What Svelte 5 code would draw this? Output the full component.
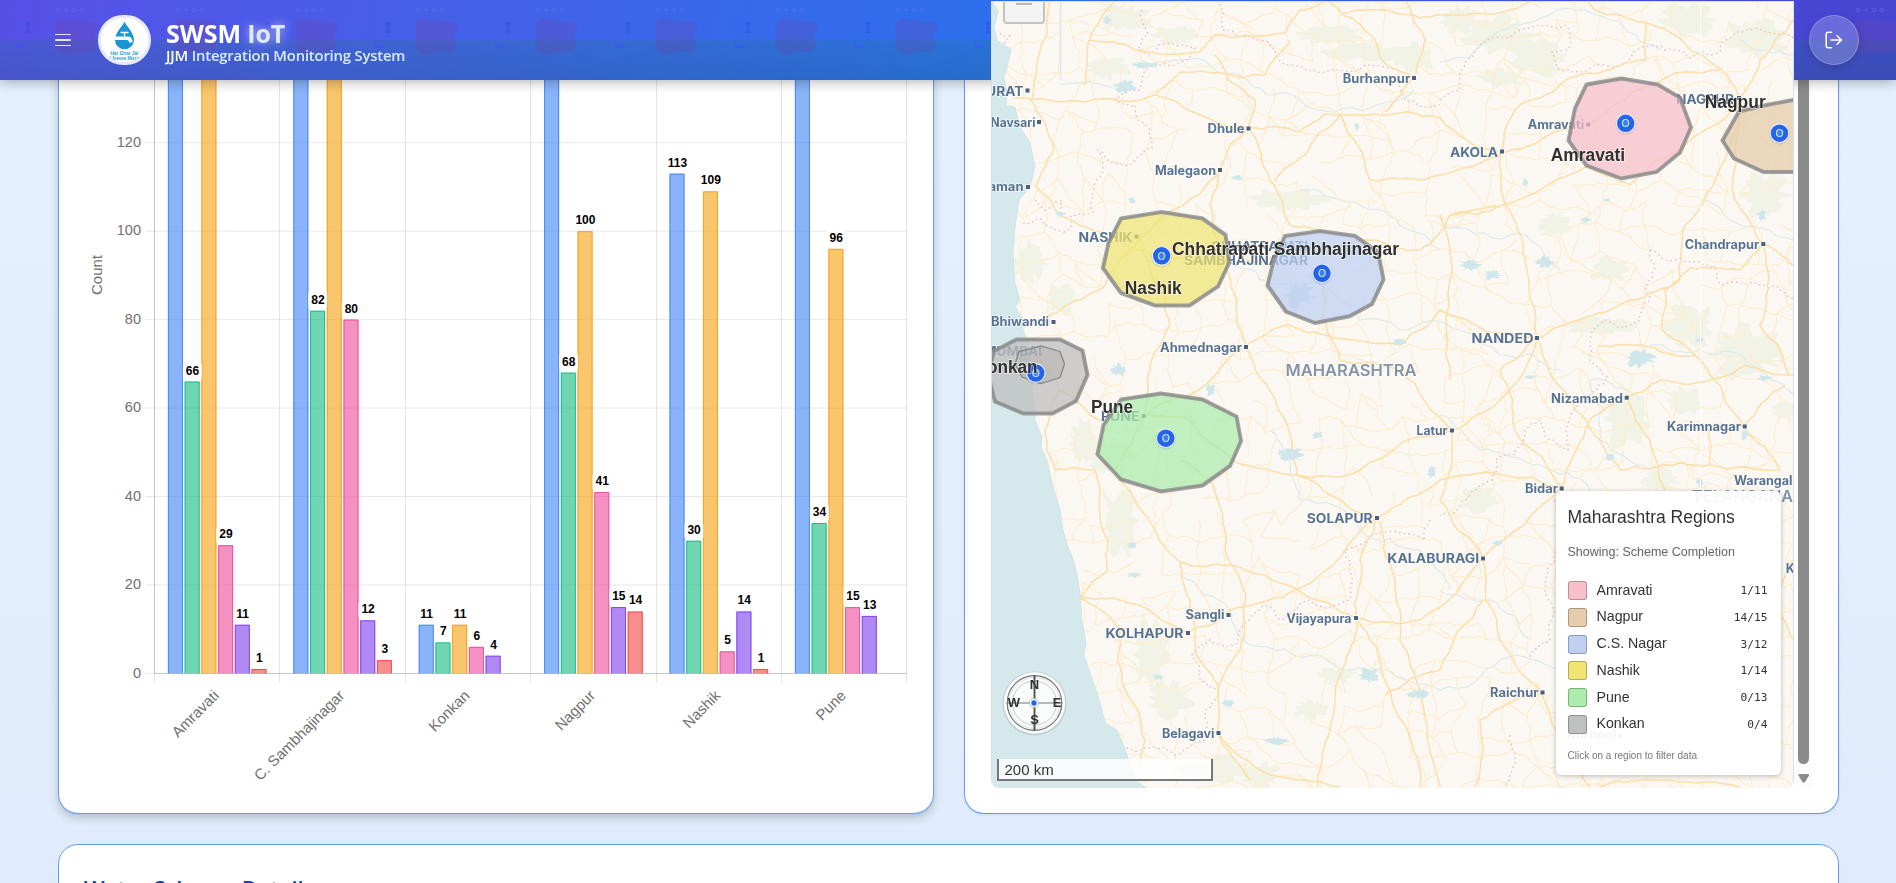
<script>
  const seriesColors = ['59,130,246', '16,185,129', '245,158,11', '236,72,153', '124,58,237', '239,68,68'];
  const groups = [
    { name: 'Amravati', values: [170, 66, 160, 29, 11, 1] },
    { name: 'C. Sambhajinagar', values: [170, 82, 160, 80, 12, 3] },
    { name: 'Konkan', values: [11, 7, 11, 6, 4, 0] },
    { name: 'Nagpur', values: [170, 68, 100, 41, 15, 14] },
    { name: 'Nashik', values: [113, 30, 109, 5, 14, 1] },
    { name: 'Pune', values: [170, 34, 96, 15, 13, 0] }
  ];
  const X0 = 154.5, STEP = 125.4, Y0 = 673.4, UNIT = 4.4225;
  const ticks = [0, 20, 40, 60, 80, 100, 120];
  const yOf = (v) => Y0 - v * UNIT;
  const bars = groups.flatMap((g, gi) =>
    g.values.map((v, i) => ({
      v,
      x: X0 + gi * STEP + 13.4 + i * 16.72,
      y: yOf(v),
      h: v * UNIT,
      c: seriesColors[i]
    }))
  ).filter((b) => b.v > 0);
  const labelled = bars.filter((b) => b.y > 60);

  const legend = [
    ['Amravati', '1/11', '#f9bfc8'],
    ['Nagpur', '14/15', '#e7cdac'],
    ['C.S. Nagar', '3/12', '#c0d0f0'],
    ['Nashik', '1/14', '#f0e473'],
    ['Pune', '0/13', '#acecac'],
    ['Konkan', '0/4', '#bfc1c1']
  ];

  // name, x, baseline, width, size, dot x, dot y
  const cities = [
    ['SURAT', 977, 95.7, 46.5, 13, 1027.5, 90.5],
    ['Navsari', 990.5, 126.5, 45, 12.5, 1039, 122],
    ['Daman', 979, 191, 44.5, 12.5, 1028, 187],
    ['Burhanpur', 1342.7, 82.7, 67.5, 12.5, 1414, 78],
    ['Dhule', 1207.5, 133, 37, 12.5, 1248.5, 128.5],
    ['Malegaon', 1155, 175, 61, 12.5, 1220, 170],
    ['NASHIK', 1078.5, 241.5, 54, 13, 1136.5, 236.5],
    ['CHHATRAPATI', 1211, 251, 97, 13, 0, 0],
    ['SAMBHAJINAGAR', 1184, 265, 124, 13, 0, 0],
    ['Amravati', 1527.7, 129, 56.5, 12.5, 1588.3, 124.5],
    ['AKOLA', 1450, 156.5, 48, 13, 1502, 151.5],
    ['NAGPUR', 1676, 103.5, 58, 13, 1739, 98],
    ['Chandrapur', 1684.7, 248.5, 74.5, 12.5, 1763.3, 244],
    ['Bhiwandi', 991, 326.3, 58, 12.5, 1053.5, 322],
    ['MUMBAI', 984, 356, 58, 13, 0, 0],
    ['Ahmednagar', 1160, 351.7, 82, 12.5, 1246, 347],
    ['PUNE', 1101, 420.7, 38.5, 13, 1143.7, 416],
    ['Latur', 1416.5, 434.7, 31, 12.5, 1452, 430.5],
    ['NANDED', 1471.5, 342.5, 62, 13, 1537, 338],
    ['Nizamabad', 1551, 402.5, 72, 12.5, 1626.7, 397.7],
    ['Karimnagar', 1667, 431, 74, 12.5, 1744.7, 426.5],
    ['Warangal', 1734, 485, 58.5, 12.5, 0, 0],
    ['Bidar', 1525, 493, 33, 12.5, 1561.7, 488.5],
    ['SOLAPUR', 1306.7, 523, 66, 13, 1377, 518],
    ['KALABURAGI', 1387.3, 563.3, 92, 13, 1483, 558.5],
    ['Khammam', 1785.7, 572.7, 66, 12.5, 0, 0],
    ['HYDERABAD', 1575, 557, 84, 13, 0, 0],
    ['Sangli', 1185.5, 619.3, 39, 12.5, 1228.5, 615],
    ['KOLHAPUR', 1105.5, 638, 78, 13, 1188, 633],
    ['Vijayapura', 1286.5, 623.3, 65, 12.5, 1356, 618],
    ['Belagavi', 1162, 737.5, 52.5, 12.5, 1218.5, 733],
    ['Raichur', 1490, 697, 48.5, 12.5, 1542.5, 692.5],
    ['Kurnool', 1567, 739, 49.5, 12.5, 1620.5, 736]
  ];

  const regions = [
    { fill: 'rgba(240,228,115,.72)', pts: '1121,218.5 1161.5,212 1202.5,218.5 1225.5,235 1229.5,262 1218,286.5 1189.5,305.5 1155,305.5 1121,293 1103,268 1108.5,243' },
    { fill: 'rgba(190,208,242,.72)', pts: '1285,236 1320,231 1355,236 1378,252 1383.5,279.5 1372,304 1349.5,316.3 1315,323 1286,311.5 1267.5,285.5 1273.5,261' },
    { fill: 'rgba(247,190,203,.72)', pts: '1586.5,84.5 1621.5,78.5 1657.5,84.5 1680,97.5 1691,127.5 1680,152.5 1656.5,172 1621.5,178.5 1586.5,165.5 1568.5,140.5 1575,108.5' },
    { fill: 'rgba(229,203,168,.72)', pts: '1810,97 1793,100 1766.5,105 1739,111.5 1722.5,140.5 1734,158.5 1763.5,172 1810,172' },
    { fill: 'rgba(170,236,170,.72)', pts: '1121,399.5 1161,393.5 1202.5,399.5 1236.5,416.5 1241,441 1230,466 1202.5,485.5 1161,491.5 1121,479.5 1097.5,454.5 1103.5,425' },
    { fill: 'rgba(190,190,190,.74)', pts: '1016.5,339.5 1060,339.5 1082.5,350.5 1087.5,375 1076,401 1052.5,413.5 1023.5,413.5 995,401.5 988,375 994,351' }
  ];

  const markers = [[1161.7, 255.8], [1322, 273.3], [1625.7, 123.3], [1779.5, 133.2], [1035.8, 373], [1165.8, 438.2]];
  const names = [
    ['Nashik', 1124.7, 293.5, 57],
    ['Chhatrapati Sambhajinagar', 1172, 254.7, 227],
    ['Amravati', 1550.7, 161, 74.5],
    ['Nagpur', 1704.7, 108, 61],
    ['Pune', 1091, 413, 42],
    ['Konkan', 974.5, 372.7, 63]
  ];

  // Deterministic noise for the base map's fine line work
  let seed = 41;
  const rnd = () => {
    seed = (seed * 1664525 + 1013904223) % 4294967296;
    return seed / 4294967296;
  };
  function wiggle(pts, amp = 0.13) {
    let p = pts;
    for (let k = 0; k < 3; k++) {
      const q = [p[0]];
      for (let i = 1; i < p.length; i++) {
        const [ax, ay] = p[i - 1], [bx, by] = p[i];
        const d = (rnd() - 0.5) * 2 * amp;
        q.push([(ax + bx) / 2 - (by - ay) * d, (ay + by) / 2 + (bx - ax) * d], p[i]);
      }
      p = q;
    }
    return 'M' + p.map(([x, y]) => x.toFixed(1) + ' ' + y.toFixed(1)).join('L');
  }

  const mesh = [];
  const S = 24;
  for (let r = 0; r < 35; r++) {
    mesh.push([]);
    for (let c = 0; c < 36; c++) mesh[r].push([980 + c * S + (rnd() - 0.5) * 21, -8 + r * S + (rnd() - 0.5) * 21]);
  }
  let minorRoads = '';
  for (let r = 0; r < 34; r++)
    for (let c = 0; c < 35; c++) {
      if (rnd() < 0.66) minorRoads += wiggle([mesh[r][c], mesh[r][c + 1]]);
      if (rnd() < 0.66) minorRoads += wiggle([mesh[r][c], mesh[r + 1][c]]);
      if (rnd() < 0.12) minorRoads += wiggle([mesh[r][c], mesh[r + 1][c + 1]]);
    }

  const majorRoads = [
    [[1050, 0], [1047, 35], [1036, 75], [1031, 100], [1046, 125], [1054, 148], [1036, 185], [1060, 215], [1100, 232], [1140, 250]],
    [[1118, 0], [1090, 38], [1085, 85]],
    [[1015, 98], [1085, 102], [1155, 95], [1200, 115], [1248, 128], [1300, 132], [1325, 114], [1405, 112], [1440, 118], [1500, 152]],
    [[1090, 40], [1135, 50], [1200, 52], [1215, 35], [1285, 33], [1300, 10], [1325, 0]],
    [[1155, 95], [1180, 72], [1265, 75], [1290, 40]],
    [[1215, 55], [1228, 80], [1255, 100], [1248, 128]],
    [[1248, 128], [1230, 145], [1220, 170], [1198, 195], [1140, 238], [1105, 285], [1080, 300], [1035, 325]],
    [[1248, 128], [1270, 180], [1290, 225], [1325, 235]],
    [[1220, 170], [1210, 205], [1225, 260], [1237, 300], [1246, 347], [1220, 370], [1190, 395], [1143, 416]],
    [[1140, 238], [1150, 270], [1170, 325], [1150, 370], [1143, 416]],
    [[1275, 182], [1305, 155], [1340, 115], [1370, 180], [1395, 178], [1440, 175], [1502, 152]],
    [[1325, 0], [1342, 14], [1400, 14], [1440, 15], [1510, 10], [1560, 0]],
    [[1406, 0], [1425, 40], [1414, 78], [1385, 112]],
    [[1342, 14], [1375, 40], [1382, 60], [1414, 78]],
    [[1588, 0], [1595, 10], [1645, 22], [1690, 50], [1720, 68], [1739, 98], [1690, 140], [1630, 185], [1588, 165], [1502, 205], [1450, 215]],
    [[1502, 152], [1540, 140], [1588, 124], [1650, 85], [1720, 70]],
    [[1645, 22], [1646, 60], [1610, 70], [1560, 85], [1520, 105], [1500, 152], [1505, 205], [1525, 260], [1537, 338]],
    [[1739, 98], [1760, 60], [1793, 20]],
    [[1739, 98], [1725, 160], [1685, 225], [1680, 280], [1630, 300], [1580, 320], [1537, 338]],
    [[1739, 98], [1735, 200], [1763, 244], [1768, 290], [1760, 325], [1790, 376]],
    [[1793, 265], [1763, 244], [1740, 270], [1690, 268]],
    [[1450, 215], [1500, 207]], [[1450, 215], [1420, 250], [1370, 240], [1325, 250], [1246, 260], [1140, 250]],
    [[1325, 250], [1325, 300], [1340, 360], [1400, 370], [1452, 430]],
    [[1246, 347], [1290, 325], [1325, 335], [1400, 345], [1440, 310], [1537, 338]],
    [[1246, 347], [1262, 380], [1285, 420], [1297, 475], [1340, 500], [1377, 518], [1395, 580], [1400, 640], [1420, 690], [1440, 787]],
    [[1143, 416], [1190, 420], [1235, 462], [1297, 475], [1360, 470], [1452, 430], [1500, 400], [1537, 338]],
    [[1143, 416], [1115, 470], [1180, 562], [1190, 600], [1195, 650], [1218, 685], [1218, 733], [1250, 780]],
    [[1143, 416], [1100, 420], [1060, 390], [1040, 360]],
    [[1060, 390], [1045, 430], [1055, 470], [1095, 470], [1108, 540], [1108, 570], [1080, 598], [1120, 630], [1125, 690], [1145, 740], [1140, 770]],
    [[1080, 598], [1120, 600], [1188, 633], [1230, 610], [1300, 588], [1377, 518], [1440, 480], [1562, 488]],
    [[1180, 562], [1230, 565], [1298, 590], [1356, 618], [1420, 620], [1483, 558], [1562, 488], [1590, 420], [1627, 397]],
    [[1356, 618], [1350, 650], [1335, 700], [1318, 787]],
    [[1356, 618], [1385, 680], [1410, 740], [1420, 787]],
    [[1377, 518], [1360, 560], [1356, 618]],
    [[1218, 733], [1270, 775], [1340, 787]],
    [[1246, 594], [1225, 550], [1210, 480], [1180, 460]],
    [[1246, 594], [1240, 650], [1218, 700]],
    [[1452, 430], [1440, 500], [1483, 558], [1500, 640], [1542, 692], [1560, 740], [1590, 787]],
    [[1537, 338], [1570, 400], [1600, 440], [1620, 470], [1680, 463], [1710, 465], [1780, 470]],
    [[1627, 397], [1650, 440], [1665, 490]], [[1627, 397], [1660, 380], [1720, 378], [1745, 365], [1793, 375]],
    [[1597, 346], [1655, 348], [1695, 355], [1720, 385], [1744, 426], [1780, 470]],
    [[1710, 465], [1708, 430], [1744, 426], [1785, 385]],
    [[1695, 355], [1662, 330], [1665, 290], [1690, 268]],
    [[1440, 215], [1450, 280], [1450, 380]], [[1537, 338], [1500, 370], [1515, 430], [1562, 488]],
    [[1542, 692], [1480, 720], [1475, 787]], [[1385, 695], [1440, 670], [1483, 600]],
    [[1793, 560], [1775, 610], [1793, 640]], [[1600, 787], [1670, 780], [1740, 787]]
  ].map((p) => wiggle(p, 0.09)).join('');

  const rivers = [
    [[1140, 60], [1180, 60], [1240, 75], [1300, 100], [1370, 108], [1414, 90]],
    [[1060, 85], [1120, 88]],
    [[1440, 62], [1490, 40], [1540, 18], [1610, 20], [1660, 50]],
    [[1140, 262], [1230, 265], [1270, 285], [1330, 290], [1400, 330], [1460, 330], [1500, 355], [1560, 370]],
    [[1300, 190], [1370, 210], [1410, 230], [1440, 250]],
    [[1440, 415], [1480, 450], [1540, 465], [1590, 490]],
    [[1270, 430], [1290, 475], [1300, 500], [1360, 530], [1420, 550], [1450, 590]],
    [[1180, 575], [1230, 610], [1250, 645], [1320, 655], [1370, 670], [1440, 690], [1500, 660], [1560, 670]],
    [[1440, 590], [1490, 600], [1530, 640]],
    [[1640, 400], [1590, 380], [1600, 440], [1650, 470]],
    [[1650, 345], [1700, 350], [1760, 370], [1793, 395]],
    [[1700, 200], [1730, 220], [1793, 240]],
    [[1440, 225], [1510, 235], [1560, 270]],
    [[1740, 40], [1793, 55]]
  ].map((p) => wiggle(p, 0.16)).join('');

  const borders = [
    [[1218, 0], [1222, 30], [1260, 40], [1285, 65], [1330, 70], [1400, 70], [1405, 100], [1440, 105]],
    [[1142, 10], [1148, 35], [1138, 48], [1150, 54], [1195, 48], [1190, 58], [1155, 65], [1140, 90], [1115, 98], [1135, 105], [1150, 130], [1152, 148], [1130, 165], [1098, 150], [1103, 165], [1092, 195], [1093, 212], [1072, 215], [1068, 230], [1040, 218], [1020, 222]],
    [[1440, 100], [1460, 90], [1465, 65], [1480, 45], [1520, 30], [1565, 25], [1567, 50], [1552, 52], [1560, 70], [1590, 68], [1640, 48], [1665, 50], [1690, 58], [1720, 52], [1722, 42], [1750, 30], [1793, 38]],
    [[1650, 250], [1655, 268], [1646, 285], [1650, 300], [1640, 320], [1625, 328], [1605, 320], [1590, 345], [1590, 360], [1608, 378], [1590, 395], [1570, 415], [1568, 450], [1550, 440], [1540, 420], [1525, 430], [1515, 455], [1495, 460], [1492, 480], [1470, 495], [1440, 515]],
    [[1650, 250], [1690, 262], [1715, 268], [1722, 285], [1760, 285], [1793, 298]],
    [[1430, 520], [1425, 540], [1345, 550], [1350, 600], [1310, 600], [1280, 620], [1265, 605], [1240, 630], [1235, 645], [1210, 640], [1192, 655], [1200, 680], [1218, 690], [1205, 710], [1205, 740], [1175, 755], [1150, 748], [1125, 748]],
    [[1554, 500], [1560, 540], [1545, 580], [1555, 610], [1550, 640], [1530, 660]],
    [[1510, 735], [1515, 760], [1503, 787]],
    [[1000, 33], [1012, 35], [1003, 45]],
    [[1035, 200], [1045, 210], [1062, 200], [1060, 215]]
  ].map((p) => wiggle(p, 0.18)).join('');

  function blob(cx, cy, rx, ry) {
    const n = 30;
    let d = '';
    for (let i = 0; i < n; i++) {
      const a = (i / n) * Math.PI * 2, k = 0.45 + rnd() * 0.65;
      d += (i ? 'L' : 'M') + (cx + Math.cos(a) * rx * k).toFixed(1) + ' ' + (cy + Math.sin(a) * ry * k).toFixed(1);
    }
    return d + 'Z';
  }
  const parks = [
    [1108, 68, 22, 12], [1125, 18, 28, 12], [1175, 35, 22, 9], [1330, 35, 35, 9], [1370, 52, 50, 9], [1415, 58, 20, 16], [1290, 200, 40, 12],
    [1500, 35, 40, 22], [1535, 58, 30, 18], [1500, 78, 25, 9], [1460, 20, 25, 14], [1690, 20, 30, 18], [1755, 40, 35, 20], [1765, 195, 26, 25],
    [1030, 260, 18, 22], [1060, 300, 18, 18], [1110, 455, 25, 18], [1120, 520, 18, 40], [1150, 655, 20, 40], [1170, 700, 24, 18], [1215, 770, 35, 14], [1260, 775, 20, 14],
    [1555, 225, 16, 12], [1610, 270, 20, 14], [1600, 325, 40, 8], [1690, 325, 28, 22], [1745, 350, 40, 28], [1625, 420, 24, 30], [1685, 400, 18, 14], [1660, 480, 18, 12], [1785, 410, 12, 10],
    [1335, 675, 20, 7], [1310, 710, 18, 9], [1480, 500, 20, 14], [1010, 300, 10, 20], [1085, 440, 15, 22]
  ].map((b) => blob(...b)).join('');
  const lakes = [
    [1125, 86, 12, 8], [1145, 65, 16, 4], [1640, 358, 17, 10], [1368, 675, 12, 9], [1420, 694, 12, 5], [1300, 295, 18, 14], [1290, 455, 16, 7], [1237, 178, 6, 3],
    [1107, 20, 5, 5], [1158, 677, 7, 3], [1228, 703, 7, 4], [1277, 741, 14, 4], [1135, 575, 8, 3], [1132, 545, 5, 4], [1545, 262, 9, 6], [1470, 265, 12, 6], [1492, 275, 10, 5], [1586, 220, 6, 3],
    [1762, 215, 5, 7], [1610, 457, 6, 4], [1744, 435, 4, 6], [1700, 483, 4, 5], [1765, 378, 8, 3], [1700, 340, 6, 3], [1498, 543, 6, 3], [1210, 390, 5, 7], [1118, 370, 8, 7], [1400, 342, 8, 4],
    [1525, 182, 3, 5], [1607, 200, 4, 2], [1357, 127, 3, 4], [1060, 214, 6, 3], [1132, 200, 4, 4], [1317, 435, 6, 4], [1432, 472, 5, 6], [1530, 377, 7, 2]
  ].map((b) => blob(...b)).join('');
</script>

<header class="topbar">
  <svg class="pattern" width="1896" height="80" aria-hidden="true">
    <defs>
      <pattern id="motif" width="120" height="120" patternUnits="userSpaceOnUse">
        <path d="M57 21q3-3 10-2q11 2 20 2q9 0 10 3q1 4-2 8q-2 4 0 8q3 6 0 9q-4 4-9 3q-7-1-12 1q-9 3-14 0q-6-4-5-9q2-5 1-9q-2-6 1-14z" fill="#7a3a98" opacity=".22" />
        <g fill="none" stroke="#7c86ff" opacity=".3"><circle cx="58" cy="10" r="1.8" /><circle cx="66" cy="10" r=".7" /><circle cx="74" cy="10" r="1.8" /><circle cx="82" cy="10" r="1.8" /></g>
        <path d="M25 22h6v2l-1.500 2v4l1.500 2v1h-6v-1l1.500-2v-4l-1.500-2z" fill="#1d3fe0" opacity=".26" />
        <path d="M13 41l3 1 2 3h6v3h-8l-1-4z" fill="#3b4cff" opacity=".42" />
        <circle cx="13.500" cy="25" r="3.500" fill="none" stroke="#3348d8" opacity=".14" />
      </pattern>
    </defs>
    <rect y="40" width="1896" height="40" fill="#10806a" opacity=".16" />
    <rect width="1896" height="80" fill="url(#motif)" />
  </svg>
  <button class="menu" aria-label="Menu"><i></i><i></i><i></i></button>
  <div class="logo">
    <svg width="47" height="44" viewBox="101 18 47 44">
      <path d="M124.500 21.500c2 5 9.500 11 9.500 18.500a9.500 9.300 0 0 1-19 0c0-7.500 7.500-13.500 9.500-18.500z" fill="#1b96d3" />
      <path d="M120.500 32.500h8M124.500 32v4" stroke="#fff" stroke-width="1.300" fill="none" />
      <path d="M115 36.500h12c4 0 5.500 2 5.500 6h-3.500c0-2-1-2.500-3-2.500h-11z" fill="#fff" />
      <text x="110.500" y="54.500" textLength="28" lengthAdjust="spacingAndGlyphs">Har Ghar Jal</text>
      <text x="105" y="59.500" textLength="38" lengthAdjust="spacingAndGlyphs">Jal Jeevan Mission</text>
    </svg>
  </div>
  <div class="brand">
    <div class="name">SWSM <span>IoT</span></div>
    <div class="tag">JJM <span>Integration Monitoring System</span></div>
  </div>
  <button class="logout" aria-label="Log out">
    <svg width="18" height="18" viewBox="0 0 18 18" fill="none" stroke="#fff" stroke-width="1.500" stroke-linecap="round" stroke-linejoin="round">
      <path d="M6.500 1.200H3.200A2 2 0 0 0 1.200 3.200v11.600a2 2 0 0 0 2 2h3.300M6 9h10.500M12 4.700L16.500 9 12 13.300" />
    </svg>
  </button>
</header>

<main>
  <section class="card chart">
    <svg width="875" height="813" viewBox="59 0 875 813">
      {#each ticks as t}
        <line x1="145" x2="907" y1={yOf(t)} y2={yOf(t)} stroke="rgba(0,0,0,.09)" />
        <text class="tick" x="141" y={yOf(t) + 4.1} text-anchor="end">{t}</text>
      {/each}
      {#each [0, 1, 2, 3, 4, 5, 6] as i}
        <line x1={Math.floor(X0 + i * STEP) + 0.5} x2={Math.floor(X0 + i * STEP) + 0.5} y1="0" y2="683" stroke="rgba(0,0,0,.1)" />
      {/each}
      <path d="M154.500 0V673M154 673.500H907" stroke="rgba(0,0,0,.14)" />
      {#each bars as b}
        <rect x={b.x} y={b.y} width="15.050" height={b.h} fill="rgba({b.c},.6)" />
        <path d="M{b.x + 0.5} {Y0}V{b.y + 0.5}H{b.x + 14.55}V{Y0}" fill="none" stroke="rgb({b.c})" stroke-opacity=".85" />
      {/each}
      {#each labelled as b}
        {@const w = String(b.v).length * 6.67}
        <rect x={b.x + 7.7 - w / 2 - 2.8} y={b.y - 19} width={w + 5.6} height="17.500" rx="3" fill="#fff" opacity=".9" />
        <text class="val" x={b.x + 7.9} y={b.y - 7} text-anchor="middle">{b.v}</text>
      {/each}
      {#each groups as g, i}
        <text class="tick cat" text-anchor="end" transform="translate({X0 + (i + 0.5) * STEP + 2.6} 696.500) rotate(-45)">{g.name}</text>
      {/each}
      <text class="tick cat" text-anchor="middle" transform="translate(102 275) rotate(-90)">Count</text>
    </svg>
  </section>

  <section class="card mapcard">
    <div class="map">
      <svg width="801" height="786" viewBox="992 2 801 786">
        <rect x="992" y="0" width="801" height="790" fill="#fbf8f3" />
        <path d={parks} fill="#f1f3e7" stroke="#f1f3e7" stroke-width="2" stroke-linejoin="round" />
        <path d={rivers} fill="none" stroke="#dcebed" stroke-width="1.200" />
        <path d={minorRoads} fill="none" stroke="#fdeed0" stroke-width="1.200" />
        <path d={borders} fill="none" stroke="#e3c6d0" stroke-width="1.400" stroke-dasharray="1.800 3" />
        <path d={majorRoads} fill="none" stroke="#fbe0ab" stroke-width="1.600" stroke-linejoin="round" />
        <path d={lakes} fill="#cfe6ea" />
        <path d="M980 0H992L998 12 994 27 997 40 1011 50 1008 63 1004 78 1007 92 1006 106 1015 107 1020 127 1030 143 1035 167 1030 187 1019 200 1015 227 1013 253 1015 283 1019 300 1015 307 1022 317 1023 330 1028 342 1032 387 1034 403 1035 420 1042 437 1041 447 1047 460 1052 483 1060 510 1063 530 1069 550 1071 553 1076 570 1080 593 1082 620 1086 643 1084 655 1090 673 1097 693 1102 710 1105 723 1117 730 1124 747 1129 760 1135 780 1150 790H980Z" fill="#d5e8eb" stroke="#c8dfe5" stroke-width=".7" />
        <path d="M1060.500 0V80" stroke="#e1e4ec" stroke-width="1.500" /><path d="M1700.500 0V490" stroke="#fff" opacity=".8" />
        <g class="place">
          {#each cities as c}
            <text x={c[1]} y={c[2]} font-size={c[4]} textLength={c[3]} lengthAdjust="spacingAndGlyphs">{c[0]}</text>
            {#if c[5]}<rect x={c[5] - 2} y={c[6] - 2} width="4" height="4" fill="#49617f" />{/if}
          {/each}
        </g>
        <g class="state">
          <text x="1285.500" y="375.700" textLength="131" lengthAdjust="spacingAndGlyphs">MAHARASHTRA</text>
          <text x="1692" y="502" textLength="101" lengthAdjust="spacingAndGlyphs">TELANGANA</text>
        </g>
        {#each regions as r}
          <polygon points={r.pts} fill={r.fill} stroke="#8c8c8c" stroke-opacity=".8" stroke-width="4" />
          <polygon points={r.pts} fill="none" stroke="#666" stroke-opacity=".3" stroke-width="1" />
        {/each}
        <polygon points="1019,351.500 1041,346 1060,351.500 1064.500,364 1060,377.500 1041,383.500 1022,377 1015,364" fill="rgba(160,160,160,.3)" stroke="#888" stroke-width="1.300" />
        {#each markers as m}
          <circle cx={m[0]} cy={m[1] + 1} r="10.500" fill="#1e3a8a" opacity=".1" />
          <circle cx={m[0]} cy={m[1]} r="9.300" fill="#2563eb" stroke="#e6edfb" stroke-width="1.200" />
          <ellipse cx={m[0]} cy={m[1]} rx="3" ry="3.900" fill="#3b82f6" />
          <text class="mk" x={m[0]} y={m[1] + 4} text-anchor="middle">O</text>
        {/each}
        <g class="rname">
          {#each names as n}
            <text x={n[1]} y={n[2]} textLength={n[3]} lengthAdjust="spacingAndGlyphs">{n[0]}</text>
          {/each}
        </g>
        <circle cx="1034.500" cy="703.500" r="32" fill="#223" opacity=".12" />
        <circle cx="1034.500" cy="703" r="30.700" fill="#fbfdfd" />
        <g fill="none">
          <circle cx="1034.500" cy="703" r="27.300" stroke="#777" stroke-width="1.200" />
          <circle cx="1034.500" cy="703" r="25.500" stroke="#ccc" stroke-width=".6" />
          <circle cx="1034.500" cy="703" r="22" stroke="#c9c9c9" />
          <path d="M1006.500 703h56" stroke="#777" />
          <path d="M1034.500 675v56" stroke="#555" stroke-width="2" />
        </g>
        <circle cx="1034" cy="703" r="4.600" fill="#fff" stroke="#aaa" stroke-width=".8" />
        <circle cx="1034" cy="703" r="2.700" fill="#2563eb" />
        <g class="nesw">
          <text x="1034.500" y="688.500">N</text><text x="1034.500" y="724">S</text><text x="1014" y="707">W</text><text x="1057" y="707">E</text>
        </g>
      </svg>
      <div class="zoomout"></div>
      <div class="scale">200 km</div>
      <aside class="legend">
        <h3>Maharashtra Regions</h3>
        <p class="mode">Showing: Scheme Completion</p>
        <ul>
          {#each legend as l}
            <li><i style="background:{l[2]}"></i><span>{l[0]}</span><b>{l[1]}</b></li>
          {/each}
        </ul>
        <p class="hint">Click on a region to filter data</p>
      </aside>
    </div>
    <div class="scroll"><div class="thumb"></div><svg width="13" height="11"><path d="M2 1h9.500q1 .5.500 1.500l-4 6.500q-1.200 1.500-2.500 0l-4-6.500q-.5-1 .5-1.500z" fill="#8b8b8b" /></svg></div>
  </section>

  <section class="card details"><h2>Water Scheme Details</h2></section>
</main>

<style>
  :global(body) { margin: 0; overflow: hidden; font-family: 'Liberation Sans', Arial, sans-serif; }
  :global(#app) { height: 883px; overflow: hidden; background: linear-gradient(180deg, #e5f1ff, #e0ecfd); }
  .topbar { position: fixed; inset: 0 0 auto 0; z-index: 10; height: 80px; box-sizing: border-box; display: flex; align-items: center; padding: 0 37px 0 55px; background: linear-gradient(180deg, rgba(0,0,0,0) 50%, rgba(0,0,0,.06)), linear-gradient(100deg, #5750e8 0%, #4361e8 25%, #2b70ee 54%, #3a55de 76%, #4746d3 95%); box-shadow: 0 2px 12px rgba(0,0,0,.3); }
  .pattern { position: absolute; inset: 0; }
  button { padding: 0; border: 0; background: none; position: relative; }
  .menu { width: 16px; display: grid; gap: 3.600px; }
  .menu i { height: 1.900px; background: #e3e4fb; border-radius: 1px; }
  .logo { position: relative; width: 47px; height: 44px; margin-left: 27px; border: 3px solid #e9e9fc; border-radius: 26px; background: #fff; overflow: hidden; }
  .logo svg { display: block; }
  .logo text { font: 700 4.600px 'Liberation Sans', sans-serif; fill: #2a9bd0; }
  .brand { position: relative; margin: 5px 0 0 15px; font-family: 'Open Sans', 'Noto Sans', sans-serif; color: #fff; white-space: nowrap; }
  .name { font-size: 25px; font-weight: 700; line-height: 25px; letter-spacing: -.1px; }
  .name span { color: #dbeafe; text-shadow: 0 0 10px rgba(255,255,255,.6); }
  .tag { font-size: 14.800px; font-weight: 650; line-height: 18px; letter-spacing: -.17px; }
  .tag span { color: #dbeafe; }
  .logout { margin-left: auto; width: 50px; height: 50px; box-sizing: border-box; border-radius: 50%; background: rgba(255,255,255,.2); border: 1px solid rgba(255,255,255,.22); box-shadow: 0 3px 8px rgba(0,0,0,.15); display: grid; place-items: center; }

  main { display: grid; grid-template-columns: 1fr 1fr; grid-template-rows: 814px 200px; gap: 30px; padding: 0 57px 0 58px; }
  .card { box-sizing: border-box; background: #fff; border: 1px solid #659bf5; min-width: 0; }
  .chart, .mapcard { border-top: 0; border-radius: 0 0 20px 20px; }
  .chart { box-shadow: 0 4px 10px rgba(0,0,0,.2); overflow: hidden; }
  .chart svg { display: block; }
  .tick { font: 14.500px 'Liberation Sans', Arial, sans-serif; fill: #707070; }
  .cat { font-size: 15px; }
  .val { font: 700 12px 'Liberation Sans', Arial, sans-serif; fill: #000; }

  .mapcard { display: flex; padding: 1px 26px 26px; box-shadow: 0 1px 3px rgba(0,0,0,.08); }
  .map { position: relative; z-index: 20; width: 801px; height: 786px; border: solid #d9dfe6; border-width: 1px 1px 0; border-radius: 0 0 8px 8px; overflow: hidden; flex: none; box-sizing: content-box; }
  .map > svg { display: block; }
  .place { font-family: Inter, 'Open Sans', sans-serif; font-weight: 700; fill: #587391; stroke: #fff; stroke-opacity: .7; stroke-width: 1.500px; paint-order: stroke; }
  .state { font: 600 16px Inter, sans-serif; fill: #8494a8; stroke: #fff; stroke-opacity: .7; stroke-width: 1.500px; paint-order: stroke; }
  .mk { font: 10.500px 'Liberation Sans', sans-serif; fill: #dbeafe; }
  .rname { font: 700 17.600px 'Liberation Sans', Arial, sans-serif; fill: #303030; stroke: #fff; stroke-opacity: .6; stroke-width: 1.500px; paint-order: stroke; }
  .nesw { font: 700 13px 'Liberation Sans', sans-serif; fill: #333; text-anchor: middle; }
  .zoomout { position: absolute; left: 11px; top: -23px; width: 38px; height: 41px; border: 2px solid #c3c3c1; border-radius: 4px; background: #f4f4f4 linear-gradient(#bbb, #bbb) 50% 22px / 16px 2px no-repeat; }
  .scale { position: absolute; left: 5px; bottom: 7px; width: 206px; height: 20px; padding-left: 6px; border: 2px solid #777; border-top: 0; background: rgba(255,255,255,.8); font-size: 15px; line-height: 21px; color: #333; }
  .legend { position: absolute; left: 564px; top: 489px; width: 201px; height: 260px; padding: 12px; border-radius: 6px; background: rgba(255,255,255,.93); box-shadow: 0 1px 5px rgba(0,0,0,.25); color: #333; }
  .legend h3 { margin: 3px 0 0; font-size: 17.500px; font-weight: 400; line-height: 22px; white-space: nowrap; }
  .legend p { margin: 0; white-space: nowrap; }
  .mode { padding-top: 16px; font-size: 12.500px; line-height: 16px; color: #666; }
  .legend ul { list-style: none; margin: 21px 0 0; padding: 0; }
  .legend li { display: flex; align-items: center; height: 19px; margin-bottom: 7.800px; }
  .legend li i { box-sizing: border-box; width: 19px; height: 19px; border: 1px solid rgba(0,0,0,.25); border-radius: 3px; }
  .legend li span { margin: -2px 0 0 10px; font-size: 14.200px; }
  .legend li b { margin: 0 1px 0 auto; font: 11.200px 'DejaVu Sans Mono', monospace; }
  .hint { padding-top: 8px; font-size: 10px; line-height: 12px; color: #777; }
  .scroll { width: 18px; height: 787px; margin-left: 2px; background: #fcfcfc; display: flex; flex-direction: column; align-items: flex-start; gap: 9px; }
  .thumb { width: 11px; height: 763px; margin-left: 2px; border-radius: 0 0 6px 6px; background: #8b8b8b; }
  .scroll svg { margin-left: 1px; }
  .details { grid-column: 1 / -1; border-radius: 20px; padding: 26px 25px; }
  .details h2 { margin: 0; font: 600 21.800px/36px 'Open Sans', 'Noto Sans', sans-serif; color: #1e40af; }
</style>
